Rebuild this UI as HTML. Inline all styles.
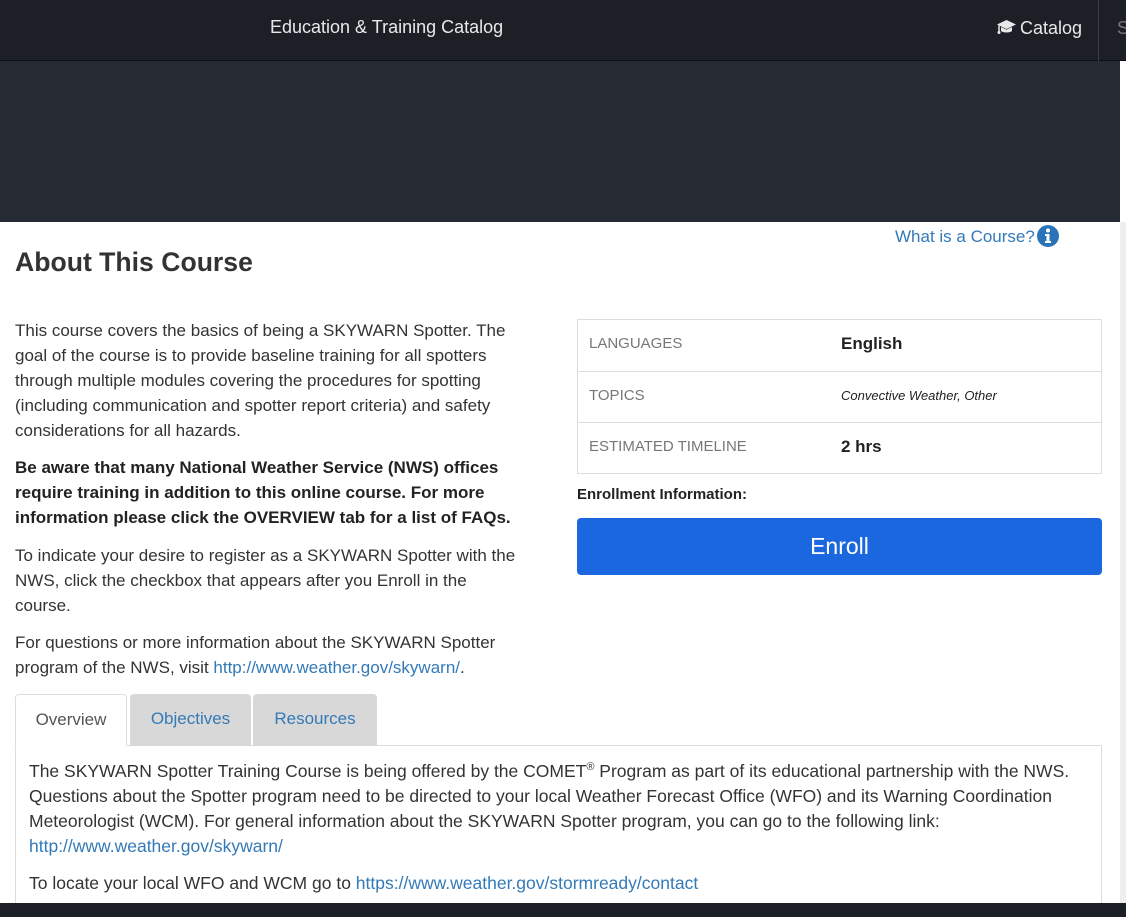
<!DOCTYPE html>
<html><head><meta charset="utf-8"><style>
*{box-sizing:border-box;margin:0;padding:0}
body{width:1126px;height:917px;overflow:hidden;background:#fff;font-family:"Liberation Sans",Arial,sans-serif;color:#333;font-size:17px;position:relative}
.nav{position:absolute;left:0;top:0;width:1126px;height:61px;background:#1c2026;border-bottom:1px solid #0e1114}
.nav .t{position:absolute;left:270px;top:17px;color:#e8e8e8;font-size:18px}
.nav .c{position:absolute;left:996px;top:18px;color:#e8e8e8;font-size:18px}
.nav .d{position:absolute;left:1098px;top:0;width:1px;height:61px;background:#3a3f46}
.nav .s{position:absolute;left:1117px;top:18px;color:#777;font-size:18px}
.hero{position:absolute;left:0;top:61px;width:1120px;height:161px;background:#262b33}
.strip{position:absolute;left:1120px;top:61px;width:6px;height:845px;background:#eee}
.strip2{position:absolute;left:1120px;top:61px;width:6px;height:161px;background:#fff}
a{color:#337ab7;text-decoration:none}
.p{position:absolute;left:15px;width:525px;line-height:25px;font-size:17px}
h1{position:absolute;left:15px;top:247px;font-size:26.6px;font-weight:bold;color:#333}
.tbl{position:absolute;left:577px;top:319px;width:525px;border:1px solid #ddd}
.row{height:51px;border-top:1px solid #ddd;position:relative}
.row:first-child{border-top:none}
.row .k{position:absolute;left:11px;top:15px;color:#777;font-size:15px}
.row .v{position:absolute;left:263px;top:14px;font-size:17px;font-weight:bold;color:#222}
.btn{position:absolute;left:577px;top:518px;width:525px;height:57px;background:#1a67e0;border-radius:4px;color:#fff;font-size:23px;text-align:center;line-height:56px}
.tab{position:absolute;top:694px;height:52px;border-radius:4px 4px 0 0;font-size:17px;text-align:center;line-height:50px}
.box{position:absolute;left:15px;top:745px;width:1087px;height:170px;border:1px solid #ddd;padding:9px 13px;line-height:25px;font-size:17.5px}
.bot{position:absolute;left:0;top:903px;width:1126px;height:14px;background:#1c2026}
</style></head><body>
<div class="nav"><span class="t">Education &amp; Training Catalog</span>
<span class="c"><svg width="21" height="16" viewBox="0 0 21 16" style="vertical-align:-1px;margin-right:3px"><path d="M10.5 1L1 5.5l9.5 4.5L20 5.5z" fill="#e8e8e8"/><path d="M5 8v4c2 2 9 2 11 0V8l-5.5 2.6z" fill="#e8e8e8"/><path d="M3 6.5v6" stroke="#e8e8e8" stroke-width="1.5"/><circle cx="3" cy="13.5" r="1.5" fill="#e8e8e8"/></svg>Catalog</span>
<div class="d"></div><span class="s">S</span></div>
<div class="hero"></div>
<div class="strip"></div><div class="strip2"></div>
<div style="position:absolute;left:895px;top:225px;font-size:17px;color:#337ab7">What is a Course?<svg width="22" height="22" viewBox="0 0 22 22" style="vertical-align:-5px;margin-left:2px"><circle cx="11" cy="11" r="11" fill="#2a73b8"/><circle cx="11" cy="5.5" r="2" fill="#fff"/><path d="M8 9h4.5v7H14v2H8v-2h1.5v-5H8z" fill="#fff"/></svg></div>
<h1>About This Course</h1>
<div class="p" style="top:318px">This course covers the basics of being a SKYWARN Spotter. The goal of the course is to provide baseline training for all spotters through multiple modules covering the procedures for spotting (including communication and spotter report criteria) and safety considerations for all hazards.</div>
<div class="p" style="top:455px;font-weight:bold;color:#222">Be aware that many National Weather Service (NWS) offices require training in addition to this online course. For more information please click the OVERVIEW tab for a list of FAQs.</div>
<div class="p" style="top:543px;width:518px">To indicate your desire to register as a SKYWARN Spotter with the NWS, click the checkbox that appears after you Enroll in the<br>course.</div>
<div class="p" style="top:630px">For questions or more information about the SKYWARN Spotter program of the NWS, visit <a>http://www.weather.gov/skywarn/</a>.</div>
<div class="tbl">
<div class="row"><span class="k">LANGUAGES</span><span class="v">English</span></div>
<div class="row"><span class="k">TOPICS</span><span class="v" style="font-size:13px;font-weight:normal;font-style:italic;top:16px">Convective Weather, Other</span></div>
<div class="row"><span class="k">ESTIMATED TIMELINE</span><span class="v">2 hrs</span></div>
</div>
<div style="position:absolute;left:577px;top:486px;font-weight:bold;font-size:15px;color:#222">Enrollment Information:</div>
<div class="btn">Enroll</div>
<div class="box">The SKYWARN Spotter Training Course is being offered by the COMET<sup style="font-size:11px">®</sup> Program as part of its educational partnership with the NWS. Questions about the Spotter program need to be directed to your local Weather Forecast Office (WFO) and its Warning Coordination Meteorologist (WCM). For general information about the SKYWARN Spotter program, you can go to the following link: <a>http://www.weather.gov/skywarn/</a>
<div style="margin-top:12px">To locate your local WFO and WCM go to <a>https://www.weather.gov/stormready/contact</a></div></div>
<div class="tab" style="left:15px;width:112px;background:#fff;border:1px solid #ddd;border-bottom:1px solid #fff;color:#555">Overview</div>
<div class="tab" style="left:130px;width:121px;background:#d8d8d8;color:#337ab7">Objectives</div>
<div class="tab" style="left:253px;width:124px;background:#d8d8d8;color:#337ab7">Resources</div>
<div class="bot"></div>
</body></html>
